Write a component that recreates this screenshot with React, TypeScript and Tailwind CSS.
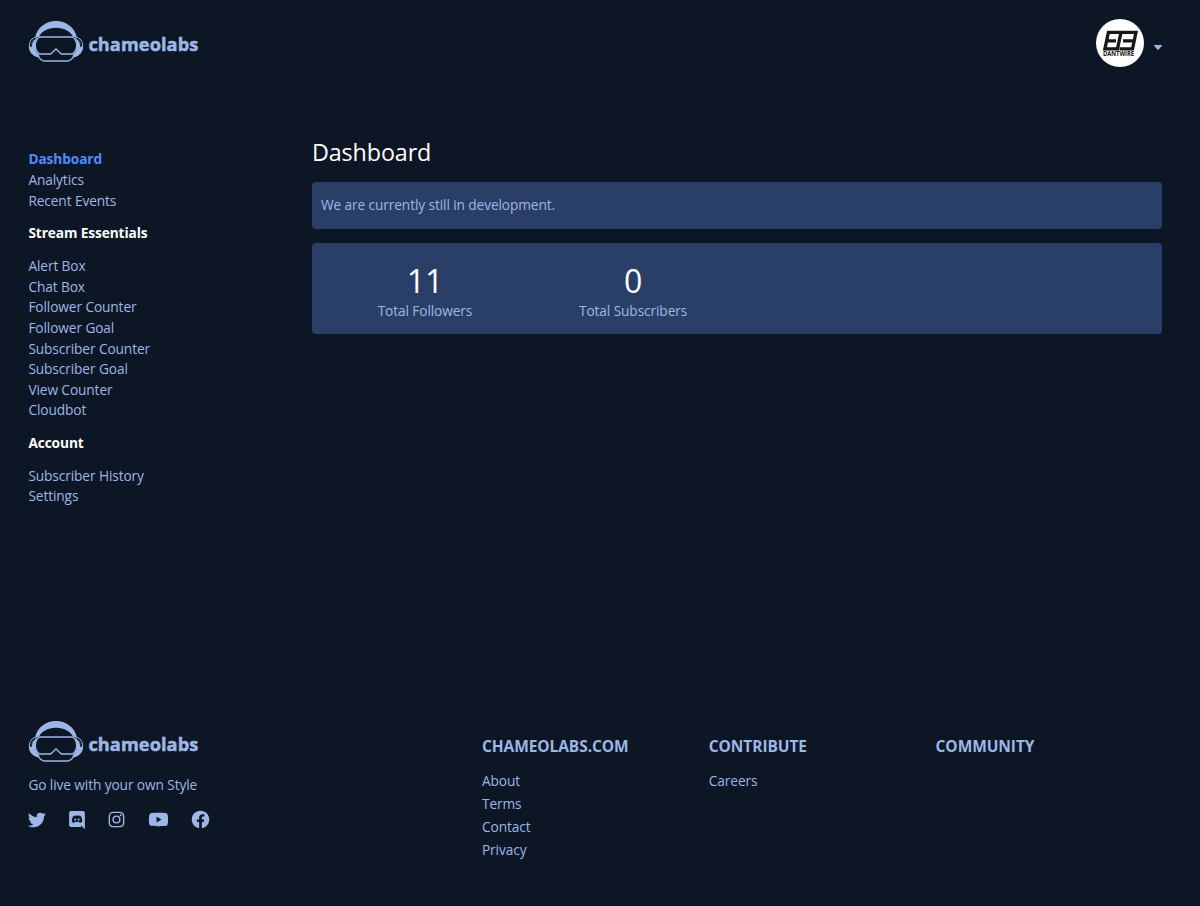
import React from 'react';
import { BiLogoTwitter, BiLogoInstagram, BiLogoYoutube, BiLogoFacebookCircle } from 'react-icons/bi';

const mainLinks = ['Analytics', 'Recent Events'];

const essentials = [
    'Alert Box',
    'Chat Box',
    'Follower Counter',
    'Follower Goal',
    'Subscriber Counter',
    'Subscriber Goal',
    'View Counter',
    'Cloudbot',
];

const account = ['Subscriber History', 'Settings'];

const stats = [
    { value: 11, label: 'Total Followers' },
    { value: 0, label: 'Total Subscribers' },
];

const footerColumns = [
    { title: 'CHAMEOLABS.COM', links: ['About', 'Terms', 'Contact', 'Privacy'] },
    { title: 'CONTRIBUTE', links: ['Careers'] },
    { title: 'COMMUNITY', links: [] },
];

function Logo() {
    return (
        <a href="#" className="flex items-center h-[42px]">
            <svg width="56" height="42" viewBox="-1 2 168 126" fill="none" stroke="currentColor" className="shrink-0">
                {/* headband */}
                <path d="M20 53C26 20 54 2 83 2s57 18 63 51l-12-4C128 34 108 22 83 22S38 34 32 49z" fill="currentColor" stroke="none" />
                {/* goggles */}
                <path d="M34 50h98c9 5 13 15 13 26 0 11-5 20-13 25H99L83 86l-16 15H34c-8-5-13-14-13-25 0-11 4-21 13-26z" strokeWidth="4" />
                {/* ear pads */}
                <path d="M24 51C10 52 3 63 3 77c0 16 9 27 25 32" strokeWidth="3" />
                <path d="M142 51c14 1 21 12 21 26 0 16-9 27-25 32" strokeWidth="3" />
                <path d="M25 54C12 58 8 68 9 79l-7-2c0 17 10 30 26 33h6l-3-8c-8-6-11-15-11-26 0-8 2-15 6-21z" fill="currentColor" stroke="none" />
                <path d="M141 54c13 4 17 14 16 25l7-2c0 17-10 30-26 33h-6l3-8c8-6 11-15 11-26 0-8-2-15-6-21z" fill="currentColor" stroke="none" />
                <path d="M22 55C13 60 9 68 9 80M144 55c9 5 13 13 13 25" strokeWidth="2.5" className="stroke-[#0d1625]" />
                {/* chin */}
                <path d="M29 108c6 8 12 14 21 14h66c9 0 15-6 21-14" strokeWidth="4" />
            </svg>
            <span className="ml-1 mt-1 text-[18.2px] leading-6 font-bold tracking-[0.07px] [-webkit-text-stroke:0.5px]">chameolabs</span>
        </a>
    );
}

function Avatar() {
    return (
        <svg width="48" height="48" viewBox="0 0 48 48">
            <circle cx="24" cy="24" r="24" fill="#fff" />
            <g fill="none" stroke="#161613" strokeWidth="3.3">
                <path d="M25.5 13.4H12.4L8.9 29.9H21.5L25 13.4M10.5 21.8H20" />
                <path d="M25 13.4H40L36.5 29.9H23.5M38.3 21.8H27" />
            </g>
            <text x="7" y="37" fontSize="6.2" fontWeight="700" textLength="31" lengthAdjust="spacingAndGlyphs" fill="#161613">DANTWIRE</text>
        </svg>
    );
}

function DiscordIcon() {
    return (
        <svg width="16" height="18" viewBox="0 0 448 512" fill="currentColor">
            <path d="M297.216 243.2c0 15.616-11.52 28.416-26.112 28.416-14.336 0-26.112-12.8-26.112-28.416s11.52-28.416 26.112-28.416c14.592 0 26.112 12.8 26.112 28.416zm-119.552-28.416c-14.592 0-26.112 12.8-26.112 28.416s11.776 28.416 26.112 28.416c14.592 0 26.112-12.8 26.112-28.416.256-15.616-11.52-28.416-26.112-28.416zM448 52.736V512c-64.494-56.994-43.868-38.128-118.784-107.776l13.568 47.36H52.48C23.552 451.584 0 428.032 0 398.848V52.736C0 23.552 23.552 0 52.48 0h343.04C424.448 0 448 23.552 448 52.736zm-72.96 242.688c0-82.432-36.864-149.248-36.864-149.248-36.864-27.648-71.936-26.88-71.936-26.88l-3.584 4.096c43.52 13.312 63.744 32.512 63.744 32.512-60.811-33.329-132.244-33.335-191.232-7.424-9.472 4.352-15.104 7.424-15.104 7.424s21.248-20.224 67.328-33.536l-2.56-3.072s-35.072-.768-71.936 26.88c0 0-36.864 66.816-36.864 149.248 0 0 21.504 37.12 78.08 38.912 0 0 9.472-11.52 17.152-21.248-32.512-9.728-44.8-30.208-44.8-30.208 3.766 2.636 9.976 6.053 10.496 6.4 43.21 24.198 104.588 32.126 159.744 8.96 8.96-3.328 18.944-8.192 29.44-15.104 0 0-12.8 20.992-46.336 30.464 7.68 9.728 16.896 20.736 16.896 20.736 56.576-1.792 78.336-38.912 78.336-38.912z" />
        </svg>
    );
}

function NavList({ items }: { items: string[] }) {
    return (
        <ul>
            {items.map((item) => (
                <li key={item}><a href="#">{item}</a></li>
            ))}
        </ul>
    );
}

function Sidebar() {
    return (
        <nav className="w-1/4 pt-[11.4px] leading-[20.6px]">
            <a href="#" className="block font-bold text-[#4d8dff]">Dashboard</a>
            <NavList items={mainLinks} />
            <h4 className="my-[12.2px] font-bold text-white">Stream Essentials</h4>
            <NavList items={essentials} />
            <h4 className="my-[12.2px] font-bold text-white">Account</h4>
            <NavList items={account} />
        </nav>
    );
}

function Footer() {
    return (
        <footer className="flex pt-5">
            <div className="w-2/5">
                <Logo />
                <p className="mt-3 leading-5">Go live with your own Style</p>
                <div className="flex items-center mt-[14.5px] h-5">
                    <BiLogoTwitter size={22} className="-ml-[2px]" />
                    <div className="ml-[21px]"><DiscordIcon /></div>
                    <BiLogoInstagram size={21} className="ml-[21px]" />
                    <BiLogoYoutube size={23} className="ml-[19.5px]" />
                    <BiLogoFacebookCircle size={21} className="ml-[20.3px]" />
                </div>
            </div>
            {footerColumns.map((col) => (
                <div key={col.title} className="w-1/5 pt-[13px]">
                    <h5 className="text-[15.5px] leading-6 font-bold tracking-[-0.08px]">{col.title}</h5>
                    <ul className="mt-[11px] leading-[23px]">
                        {col.links.map((link) => (
                            <li key={link}><a href="#">{link}</a></li>
                        ))}
                    </ul>
                </div>
            ))}
        </footer>
    );
}

export default function App() {
    return (
        <div className="flex flex-col h-[906px] pl-[28.4px] pr-[37.6px] bg-[#0d1625] text-[#9db7e5] text-[13.7px] tracking-[-0.1px] font-['Open_Sans','Noto_Sans',sans-serif]">
            <header className="flex justify-between items-start h-[138px] pt-[19px]">
                <div className="pt-[2px]"><Logo /></div>
                <button className="flex items-center">
                    <Avatar />
                    <svg width="8" height="5" viewBox="0 0 8 5" className="ml-[10px] mt-2">
                        <path d="M0 0h8v.8L4.6 4.6q-.6.5-1.2 0L0 .8z" fill="currentColor" />
                    </svg>
                </button>
            </header>

            <div className="flex h-[563px]">
                <Sidebar />
                <main className="w-3/4">
                    <h1 className="text-[23.3px] leading-7 text-white">Dashboard</h1>
                    <div className="flex items-center h-[47px] mt-[15.5px] px-[9px] rounded bg-[#2a3f67]">
                        We are currently still in development.
                    </div>
                    <div className="flex mt-[14.5px] h-[91px] px-[9px] pt-[18px] rounded bg-[#2a3f67]">
                        {stats.map((stat) => (
                            <div key={stat.label} className="w-1/4 text-center">
                                <div className="text-[32px] leading-10 text-white tracking-normal">{stat.value}</div>
                                <div className="leading-5">{stat.label}</div>
                            </div>
                        ))}
                    </div>
                </main>
            </div>

            <Footer />
        </div>
    );
}
